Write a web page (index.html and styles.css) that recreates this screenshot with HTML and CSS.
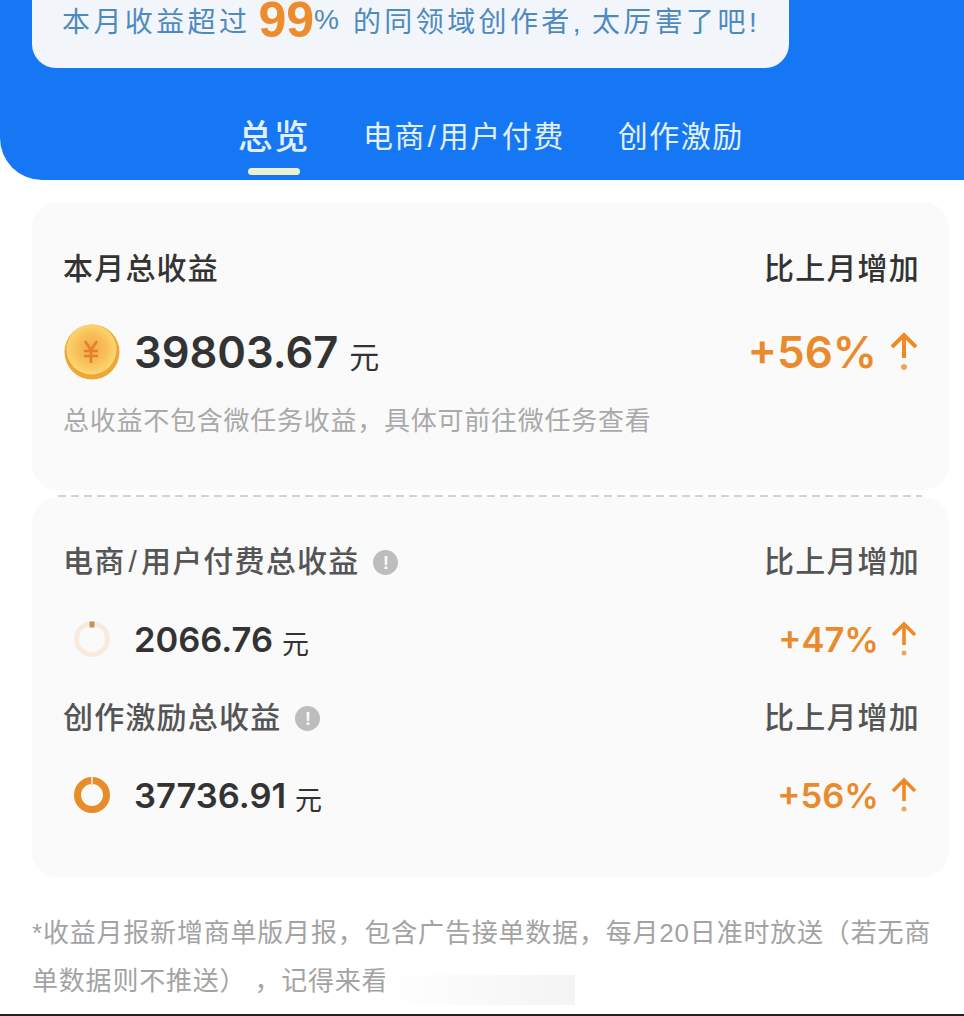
FILE: index.html
```html
<!DOCTYPE html>
<html lang="zh-CN">

<head>
    <meta charset="UTF-8">
    <meta name="viewport" content="width=device-width, initial-scale=1.0">
    <title>收益月报</title>
    <link rel="stylesheet" href="styles.css">
</head>

<body>

    <header class="header">
        <div class="banner">
            <span>本月收益超过</span>
            <span class="rank">99</span><span class="percent">%</span>
            <span>的同领域创作者,</span>
            <span>太厉害了吧!</span>
        </div>
        <nav class="tabs">
            <div class="tab active">总览</div>
            <div class="tab">电商<span class="slash">/</span>用户付费</div>
            <div class="tab">创作激励</div>
        </nav>
    </header>

    <section class="card card-top">
        <div class="row">
            <div class="label dark">本月总收益</div>
            <div class="label dark">比上月增加</div>
        </div>
        <div class="row value-row">
            <div class="amount-box">
                <svg class="coin" width="56" height="56" viewBox="0 0 56 56">
                    <defs>
                        <radialGradient id="coinFace" cx="50%" cy="48%" r="55%">
                            <stop offset="0%" stop-color="#f4a84a"/>
                            <stop offset="55%" stop-color="#f8c058"/>
                            <stop offset="100%" stop-color="#fcdc78"/>
                        </radialGradient>
                    </defs>
                    <circle cx="28" cy="28" r="27.5" fill="#eea636"/>
                    <circle cx="27.5" cy="25.5" r="25" fill="url(#coinFace)"/>
                    <path d="M21 17l6 9 6-9M20 27h14M20 32h14M27 26v13" fill="none" stroke="#e57f2a" stroke-width="2.6"/>
                </svg>
                <span class="amount big">39803.67</span>
                <span class="unit big-unit">元</span>
            </div>
            <div class="growth big-growth">
                +56%
                <svg width="30" height="40" viewBox="0 0 30 40">
                    <path d="M3 15L15 3l12 12M15 3v23" fill="none" stroke="#ee8a26" stroke-width="4"/>
                    <circle cx="15" cy="35" r="3" fill="#e9a860"/>
                </svg>
            </div>
        </div>
        <p class="note">总收益不包含微任务收益，具体可前往微任务查看</p>
    </section>

    <div class="divider"></div>

    <section class="card card-bottom">
        <div class="row">
            <div class="label with-info">
                <span>电商<span class="slash wide">/</span>用户付费总收益</span>
                <span class="info">!</span>
            </div>
            <div class="label">比上月增加</div>
        </div>
        <div class="row value-row small">
            <div class="amount-box">
                <svg class="ring" width="38" height="38" viewBox="0 0 38 38">
                    <circle cx="19" cy="19" r="15.5" fill="none" stroke="#f8ebdd" stroke-width="5"/>
                    <path d="M19 1.5v6" stroke="#c9905a" stroke-width="5"/>
                </svg>
                <span class="amount">2066.76</span>
                <span class="unit">元</span>
            </div>
            <div class="growth">
                +47%
                <svg width="26" height="36" viewBox="0 0 26 36">
                    <path d="M2 14L13 3l11 11M13 3v21" fill="none" stroke="#ee8a26" stroke-width="3.6"/>
                    <circle cx="13" cy="32" r="2.5" fill="#e9a860"/>
                </svg>
            </div>
        </div>
        <div class="row second">
            <div class="label with-info">
                <span>创作激励总收益</span>
                <span class="info">!</span>
            </div>
            <div class="label">比上月增加</div>
        </div>
        <div class="row value-row small">
            <div class="amount-box">
                <svg class="ring" width="38" height="38" viewBox="0 0 38 38">
                    <circle cx="19" cy="19" r="14.5" fill="none" stroke="#e88c2a" stroke-width="7"/>
                    <path d="M19 1v8" stroke="#f7d9b5" stroke-width="2"/>
                </svg>
                <span class="amount">37736.91</span>
                <span class="unit">元</span>
            </div>
            <div class="growth">
                +56%
                <svg width="26" height="36" viewBox="0 0 26 36">
                    <path d="M2 14L13 3l11 11M13 3v21" fill="none" stroke="#ee8a26" stroke-width="3.6"/>
                    <circle cx="13" cy="32" r="2.5" fill="#e9a860"/>
                </svg>
            </div>
        </div>
    </section>

    <p class="footnote">*收益月报新增商单版月报，包含广告接单数据，每月20日准时放送（若无商单数据则不推送）&nbsp;，记得来看</p>
    <div class="smudge"></div>
    <div class="bottom-line"></div>

</body>

</html>
```

FILE: styles.css
```css
* {
    margin: 0;
    padding: 0;
    box-sizing: border-box;
    font-family: 'Liberation Sans', 'Noto Sans CJK SC', sans-serif;
}

html,
body {
    height: 1016px;
    overflow: hidden;
}

body {
    position: relative;
    background: #fff;
    color: #333;
}

.header {
    background: #1677f5;
    height: 180px;
    border-bottom-left-radius: 42px;
    padding: 0 32px;
}

.banner {
    background: #f2f6fb;
    width: 757px;
    height: 68px;
    border-radius: 0 0 24px 24px;
    padding: 0 0 28px 30px;
    display: flex;
    align-items: center;
    gap: 8px;
    color: #4f8abf;
    font-size: 28px;
    letter-spacing: 3.4px;
    white-space: nowrap;
}

.rank {
    color: #ee8b2c;
    font-size: 50px;
    font-weight: bold;
    line-height: 38px;
    letter-spacing: 0;
    margin-right: -8px;
}

.percent {
    letter-spacing: 0;
    margin-right: 6px;
}

.tabs {
    display: flex;
    gap: 53px;
    padding: 44px 0 0 206px;
    color: #e2f0fa;
    font-size: 30px;
    line-height: 50px;
    letter-spacing: 1.5px;
}

.tab {
    position: relative;
    white-space: nowrap;
}

.tab.active {
    font-size: 34.5px;
    font-weight: 500;
}

.tab.active::after {
    content: "";
    position: absolute;
    left: 10px;
    right: 10px;
    bottom: -13px;
    height: 7px;
    border-radius: 4px;
    background: #ecf1d6;
}

.slash {
    margin: 0 1.5px;
}

.slash.wide {
    margin: 0 3px;
}

.card {
    background: #fafafa;
    margin: 0 15px 0 32px;
    padding: 0 29px 0 31px;
    border-radius: 26px;
}

.card-top {
    margin-top: 22px;
    height: 288px;
    padding-top: 46px;
}

.card-bottom {
    height: 380px;
    padding-top: 44px;
}

.divider {
    margin: 5px 42px 0 58px;
    height: 2px;
    background: repeating-linear-gradient(90deg, #d2d2d2 0 8px, transparent 8px 13px);
}

.row {
    display: flex;
    justify-content: space-between;
    align-items: center;
}

.label {
    font-size: 30px;
    line-height: 42px;
    letter-spacing: 1.2px;
    color: #555;
    font-weight: 500;
    white-space: nowrap;
}

.label.dark {
    color: #333;
}

.with-info {
    display: flex;
    align-items: center;
    gap: 14px;
}

.info {
    width: 25px;
    height: 25px;
    border-radius: 50%;
    background: #bdbdbd;
    color: #fafafa;
    font-size: 19px;
    font-weight: bold;
    line-height: 25px;
    text-align: center;
    letter-spacing: 0;
}

.value-row {
    margin-top: 30px;
    height: 64px;
}

.value-row.small {
    margin-top: 34px;
    height: 44px;
}

.row.second {
    margin-top: 36px;
}

.amount-box {
    display: flex;
    align-items: center;
}

.coin {
    margin: 0 14px 0 1px;
}

.ring {
    margin: 0 23px 0 10px;
}

.amount {
    font-family: Inter, sans-serif;
    font-size: 34.5px;
    font-weight: 600;
    color: #333;
}

.amount.big {
    font-size: 43.5px;
}

.unit {
    font-size: 27px;
    color: #333;
    margin: 6px 0 0 9px;
}

.big-unit {
    font-size: 30px;
    margin-left: 11px;
}

.growth {
    display: flex;
    align-items: center;
    gap: 12px;
    margin-right: 3px;
    font-family: Inter, sans-serif;
    color: #e98a2c;
    font-size: 34.5px;
    font-weight: 600;
}

.big-growth {
    margin-right: 1px;
    font-size: 44px;
    gap: 12px;
}

.note {
    margin-top: 19px;
    font-size: 26px;
    line-height: 36px;
    color: #a9a9a9;
    letter-spacing: 0.75px;
}

.footnote {
    margin: 32px 32px 0;
    font-size: 26px;
    line-height: 48px;
    letter-spacing: 0.8px;
    color: #a3a3a3;
}

.smudge {
    position: absolute;
    left: 385px;
    top: 975px;
    width: 190px;
    height: 30px;
    background: linear-gradient(90deg, #fff, #f4f4f4);
}

.bottom-line {
    position: absolute;
    left: 0;
    right: 0;
    bottom: 0;
    height: 2px;
    background: #222;
}
```
